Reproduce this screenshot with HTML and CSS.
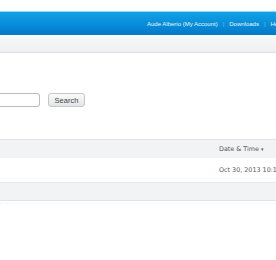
FILE: index.html
```html
<!DOCTYPE html>
<html lang="en">

<head>
    <meta charset="UTF-8">
    <meta name="viewport" content="width=device-width, initial-scale=1.0">
    <title>Downloads</title>
    <link rel="stylesheet" href="styles.css">
</head>

<body>
    <header>
        <nav class="top-bar">
            <a href="#">Aude Alberio (My Account)</a>
            <span class="sep">|</span>
            <a href="#">Downloads</a>
            <span class="sep">|</span>
            <a href="#">Help</a>
        </nav>
        <div class="sub-bar"></div>
    </header>

    <form class="search">
        <input type="text" class="search-input">
        <button type="button" class="search-btn">Search</button>
    </form>

    <table class="list">
        <tr class="head">
            <th class="name"></th>
            <th class="date">Date &amp; Time <span class="arrow">&#9662;</span></th>
        </tr>
        <tr class="row">
            <td class="name"></td>
            <td class="date">Oct 30, 2013 10:16 AM</td>
        </tr>
        <tr class="foot">
            <td colspan="2"></td>
        </tr>
    </table>
    <div class="dots"></div>
</body>

</html>
```

FILE: styles.css
```css
html,
body {
    margin: 0px;
    overflow: hidden;
    background: #fff;
    font-family: "Liberation Sans", Arial, sans-serif;
}

header {
    padding-top: 11px;
}

.top-bar {
    height: 23px;
    border-top: 1px solid #8fdcf6;
    background: linear-gradient(to bottom, #13a0e4 0%, #078bd8 60%, #0577c6 100%);
    display: flex;
    align-items: center;
    padding-left: 147px;
    white-space: nowrap;
    font-size: 6px;
}

.top-bar a {
    color: #eaf6fd;
    text-decoration: none;
}

.top-bar .sep {
    color: #6cc0ec;
    margin: 0 5px;
}

.sub-bar {
    height: 17px;
    background: linear-gradient(to bottom, #f8f9fa 0%, #eeeff1 100%);
    border-bottom: 1px solid #dcdee1;
}

.search {
    display: flex;
    align-items: center;
    gap: 8px;
    margin-top: 40px;
}

.search-input {
    width: 40px;
    height: 14px;
    box-sizing: border-box;
    border: 1px solid #b9bcc0;
    border-left: none;
    border-radius: 0 3px 3px 0;
    padding: 0;
}

.search-btn {
    width: 37px;
    height: 14px;
    padding: 0;
    font-family: "Liberation Sans", Arial, sans-serif;
    font-size: 7.5px;
    color: #444;
    border: 1px solid #c4c6c9;
    border-radius: 3px;
    background: linear-gradient(to bottom, #fbfbfb 0%, #e3e4e6 100%);
}

.list {
    width: 340px;
    table-layout: fixed;
    margin-top: 32px;
    border-collapse: collapse;
    font-family: "DejaVu Sans", Verdana, sans-serif;
    font-size: 6.4px;
    color: #5a5a5a;
}

.list td,
.list th {
    padding: 0;
    white-space: nowrap;
    text-align: left;
    font-weight: normal;
}

.list .name {
    width: 219px;
}

.head {
    height: 18px;
    background: #f1f3f5;
    border-top: 1px solid #e1e4e7;
}

.head .arrow {
    font-size: 5px;
}

.row {
    height: 25px;
    background: #fff;
    border-bottom: 1px solid #e6e8eb;
}

.foot {
    height: 18px;
    background: #f1f3f5;
    border-bottom: 1px solid #e1e3e6;
}

.dots {
    margin-top: 2px;
    border-top: 1px dotted #eef0f2;
}
```
